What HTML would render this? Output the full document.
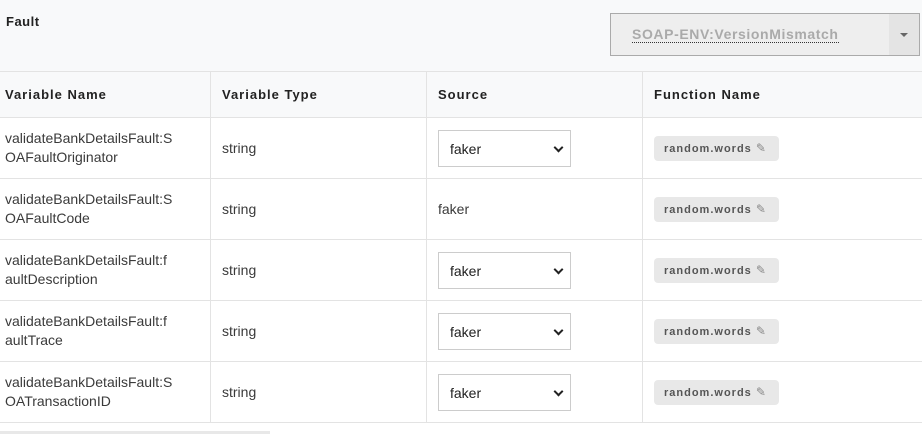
<!DOCTYPE html><html><head><style>
body{margin:0;width:922px;height:434px;overflow:hidden;background:#fff;font-family:"Liberation Sans",Arial,sans-serif;color:#222}
.top{position:absolute;left:0;top:0;width:922px;height:71px;background:#f8f9fa;border-bottom:1px solid #e3e3e3}
.fault{position:absolute;left:6px;top:14px;font-size:13px;font-weight:bold;letter-spacing:.5px}
.sel{position:absolute;left:610px;top:13px;width:310px;height:43px;border:1px solid #aaa;background:#eee;box-sizing:border-box}
.sel span{position:absolute;left:21px;top:12px;font-size:14px;font-weight:bold;color:#aaa;letter-spacing:.6px;border-bottom:1px dotted #333;line-height:16px}
.sel i{position:absolute;right:0;top:0;width:30px;height:41px;background:#e4e4e4}
.sel i:after{content:"";position:absolute;left:11px;top:19px;border:4px solid transparent;border-top:4px solid #666;border-bottom:0}
table{position:absolute;left:0;top:72px;border-collapse:collapse;width:922px}
th{height:45px;background:#f8f9fa;text-align:left;font-size:13px;letter-spacing:1px;padding:0 0 0 5px;border-bottom:1px solid #e3e3e3;border-right:1px solid #e3e3e3}
td{height:60px;font-size:14px;padding:0 0 0 5px;border-bottom:1px solid #e3e3e3;border-right:1px solid #e3e3e3;line-height:19px;color:#3a3a3a}
th:last-child,td:last-child{border-right:0}
th:nth-child(n+2),td:nth-child(n+2){padding-left:11px}
.s{width:133px;height:37px;border:1px solid #ccc;box-sizing:border-box;position:relative;font-size:14px;padding:9px 0 0 11px;color:#222}
.s:after{content:"";position:absolute;right:8px;top:13px;width:5px;height:5px;border-right:2px solid #222;border-bottom:2px solid #222;transform:rotate(45deg)}
.b{display:inline-block;background:#e8e8e8;border-radius:4px;font-size:11px;font-weight:bold;color:#555;letter-spacing:1px;padding:5px 12px 5px 10px;line-height:14px}
.b em{font-style:normal;color:#888;font-weight:normal;font-size:12px}
</style></head><body>
<div class="top"><div class="fault">Fault</div><div class="sel"><span>SOAP-ENV:VersionMismatch</span><i></i></div></div>
<table>
<tr><th style="width:205px">Variable Name</th><th style="width:204px">Variable Type</th><th style="width:204px">Source</th><th>Function Name</th></tr>
<tr><td>validateBankDetailsFault:S<br>OAFaultOriginator</td><td>string</td><td><div class="s">faker</div></td><td><span class="b">random.words <em>✎</em></span></td></tr>
<tr><td>validateBankDetailsFault:S<br>OAFaultCode</td><td>string</td><td>faker</td><td><span class="b">random.words <em>✎</em></span></td></tr>
<tr><td>validateBankDetailsFault:f<br>aultDescription</td><td>string</td><td><div class="s">faker</div></td><td><span class="b">random.words <em>✎</em></span></td></tr>
<tr><td>validateBankDetailsFault:f<br>aultTrace</td><td>string</td><td><div class="s">faker</div></td><td><span class="b">random.words <em>✎</em></span></td></tr>
<tr><td>validateBankDetailsFault:S<br>OATransactionID</td><td>string</td><td><div class="s">faker</div></td><td><span class="b">random.words <em>✎</em></span></td></tr>
</table>
<div style="position:absolute;left:0;top:431px;width:270px;height:3px;background:#e8e8e8"></div>
</body></html>
